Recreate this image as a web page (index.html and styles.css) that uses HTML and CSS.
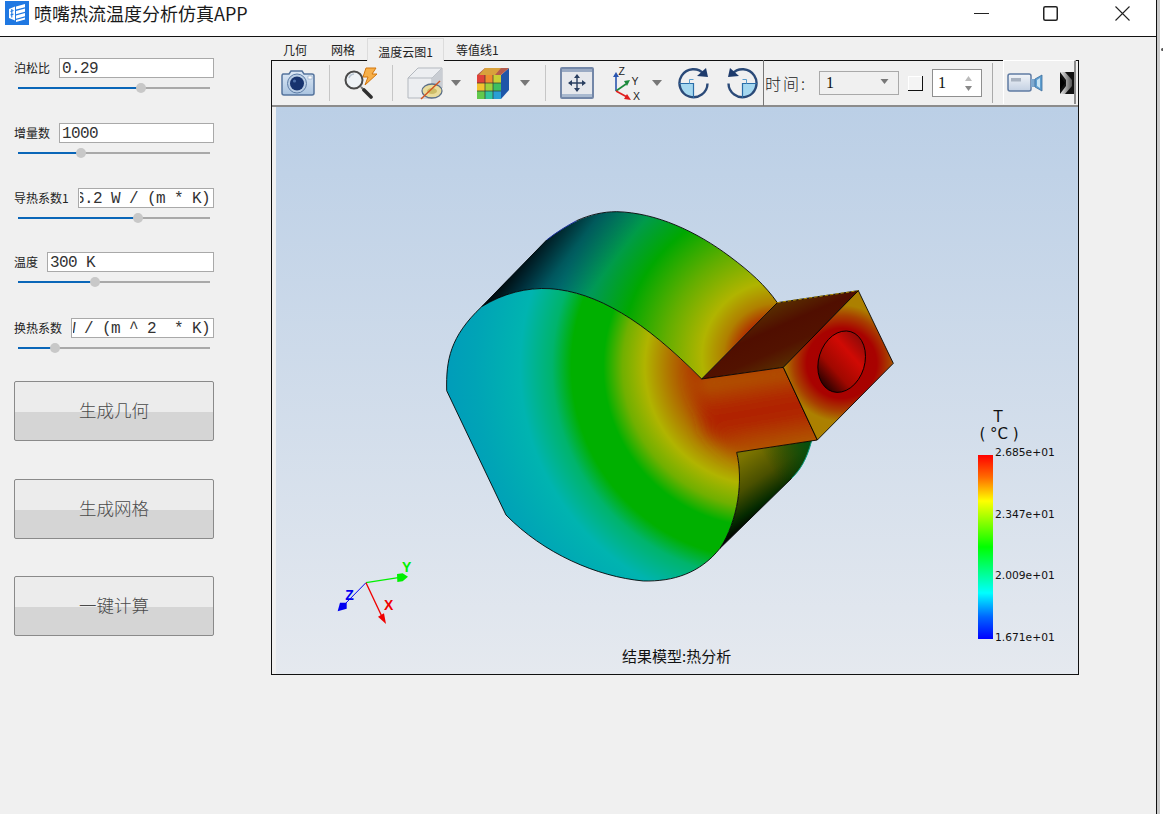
FILE: index.html
```html
<!DOCTYPE html>
<html lang="zh">
<head>
<meta charset="utf-8">
<title>喷嘴热流温度分析仿真APP</title>
<link rel="stylesheet" href="styles.css">
</head>
<body>
<div class="screen">
  <div class="window">
    <header class="titlebar">
      <svg class="app-icon" viewBox="0 0 24 24">
        <rect width="24" height="24" fill="#1f78e2"/>
        <path d="M4 8l6-2.5v14L4 17z" fill="#fff"/>
        <path d="M5.5 10.5l3-1M5.5 14l3-1" stroke="#1f78e2" stroke-width="1.2"/>
        <path d="M6.8 8v8.5" stroke="#1f78e2" stroke-width="1.1"/>
        <path d="M11 5.5l9-2.5v3.2l-9 2.4zM11 10l9-2.4v3.2l-9 2.4zM11 14.5l9-2.4v3.2l-9 2.4zM11 19l9-2.4v1.8l-9 2.6z" fill="#fff"/>
      </svg>
      <span class="app-title">喷嘴热流温度分析仿真APP</span>
      <div class="win-controls">
        <svg class="win-min" viewBox="0 0 15 15"><path d="M0 7.5h15" stroke="#222" stroke-width="1"/></svg>
        <svg class="win-max" viewBox="0 0 15 15"><rect x=".75" y=".75" width="13.5" height="13.5" rx="1.5" fill="none" stroke="#222" stroke-width="1.5"/></svg>
        <svg class="win-close" viewBox="0 0 15 15"><path d="M.5.5l14 14M14.5.5l-14 14" stroke="#222" stroke-width="1.1"/></svg>
      </div>
    </header>
    <main class="content">
      <aside class="panel">
        <section class="param">
          <div class="param-row"><label>泊松比</label><div class="field"><span>0.29</span></div></div>
          <div class="slider"><i class="fill" style="width:64%"></i><b class="knob" style="left:64%"></b></div>
        </section>
        <section class="param">
          <div class="param-row"><label>增量数</label><div class="field"><span>1000</span></div></div>
          <div class="slider"><i class="fill" style="width:33%"></i><b class="knob" style="left:33%"></b></div>
        </section>
        <section class="param">
          <div class="param-row"><label>导热系数1</label><div class="field clipped"><span>16.2 W / (m * K)</span></div></div>
          <div class="slider"><i class="fill" style="width:62.5%"></i><b class="knob" style="left:62.5%"></b></div>
        </section>
        <section class="param param-up">
          <div class="param-row"><label>温度</label><div class="field"><span>300 K</span></div></div>
          <div class="slider"><i class="fill" style="width:40%"></i><b class="knob" style="left:40%"></b></div>
        </section>
        <section class="param param-down">
          <div class="param-row"><label>换热系数</label><div class="field clipped clip-wide"><span>W / (m ^ 2  * K)</span></div></div>
          <div class="slider"><i class="fill" style="width:19.3%"></i><b class="knob" style="left:19.3%"></b></div>
        </section>
        <button class="action first">生成几何</button>
        <button class="action second">生成网格</button>
        <button class="action third">一键计算</button>
      </aside>

      <section class="workspace">
        <nav class="tabs">
          <span class="tab tab-a">几何</span>
          <span class="tab tab-b">网格</span>
          <span class="tab tab-active">温度云图1</span>
          <span class="tab tab-d">等值线1</span>
        </nav>
        <div class="viewer">
          <div class="toolbar">
            <svg class="ti i-camera" viewBox="0 0 34 28">
              <defs><linearGradient id="camBody" x1="0" y1="0" x2="0" y2="1"><stop offset="0" stop-color="#dfeaf6"/><stop offset="1" stop-color="#a9c3e0"/></linearGradient></defs>
              <path d="M2 5h6l2-3h11l2 3h8a2 2 0 0 1 2 2v17a2 2 0 0 1-2 2H3a2 2 0 0 1-2-2V7a2 2 0 0 1 1-2z" fill="url(#camBody)" stroke="#55749d" stroke-width="1.5"/>
              <circle cx="16" cy="14.5" r="9.5" fill="#b9cde4" stroke="#5d7ca5" stroke-width="1"/>
              <circle cx="16" cy="14.5" r="7" fill="#17336e"/>
              <circle cx="13.5" cy="12" r="1.6" fill="#4d6fa8"/>
              <rect x="27" y="7" width="4" height="3" fill="#fff" stroke="#7e97b8" stroke-width=".5"/>
            </svg>
            <i class="tsep s-1"></i>
            <svg class="ti i-mag" viewBox="0 0 36 32">
              <path d="M22 1h10l-4 6h5L21 18l3-8h-5z" fill="#f7b04a" stroke="#d4760c" stroke-width="1"/>
              <circle cx="10" cy="13" r="8.5" fill="#eef2f6" stroke="#4a4a4a" stroke-width="2"/>
              <path d="M5 11a6 6 0 0 1 5-4" fill="none" stroke="#b7c4d2" stroke-width="1.5"/>
              <path d="M17 20l3 3" stroke="#777" stroke-width="2"/>
              <path d="M20 23l7 7" stroke="#2f2f2f" stroke-width="3.6" stroke-linecap="round"/>
            </svg>
            <i class="tsep s-2"></i>
            <svg class="ti i-box" viewBox="0 0 36 33">
              <path d="M1 11L11 1h24v20L25 31H1z" fill="#eceef1" stroke="#b3b8bf" stroke-width="1"/>
              <path d="M1 11h24v20M25 11L35 1" fill="none" stroke="#b3b8bf" stroke-width="1"/>
              <path d="M25 11L35 1v20L25 31z" fill="#c9cdd3"/>
              <ellipse cx="25" cy="24" rx="10" ry="7" fill="#e9dc9c" stroke="#5c7089" stroke-width="1.3"/>
              <ellipse cx="25" cy="24" rx="5" ry="3" fill="#cdbd68"/>
              <path d="M14 32L33 14" stroke="#d2521e" stroke-width="1.4"/>
            </svg>
            <svg class="ti i-arrow a-1" viewBox="0 0 10 6"><path d="M0 0h10L5 6z" fill="#777"/></svg>
            <svg class="ti i-cube" viewBox="0 0 33 33">
              <path d="M24 8l8-7v22l-8 9z" fill="#1d55a8"/>
              <path d="M0 8L8 1h24l-8 7z" fill="#b45b4c"/>
              <path d="M8 1h8l-6 7H2zM16 1h8l-6 7h-8z" fill="#d9a13c"/>
              <rect x="0" y="8" width="8" height="8" fill="#e0413a"/>
              <rect x="8" y="8" width="8" height="8" fill="#f08c2e"/>
              <rect x="16" y="8" width="8" height="8" fill="#c9cf35"/>
              <rect x="0" y="16" width="8" height="8" fill="#f2c22f"/>
              <rect x="8" y="16" width="8" height="8" fill="#9ed13c"/>
              <rect x="16" y="16" width="8" height="8" fill="#3dbf62"/>
              <rect x="0" y="24" width="8" height="8" fill="#62c94c"/>
              <rect x="8" y="24" width="8" height="8" fill="#30c6a0"/>
              <rect x="16" y="24" width="8" height="8" fill="#2a9fd6"/>
              <path d="M8 8v24M16 8v24M0 16h24M0 24h24" stroke="#333" stroke-width=".7"/>
            </svg>
            <svg class="ti i-arrow a-2" viewBox="0 0 10 6"><path d="M0 0h10L5 6z" fill="#777"/></svg>
            <i class="tsep s-3"></i>
            <svg class="ti i-fit" viewBox="0 0 34 32">
              <rect x="1" y="1" width="32" height="30" rx="1" fill="#e6e8ec" stroke="#7387a8" stroke-width="2"/>
              <rect x="2" y="2" width="30" height="3" fill="#9aaac3"/>
              <rect x="2" y="27" width="30" height="3" fill="#a9b9cf"/>
              <path d="M17 8v16M9 16h16" stroke="#2a3f60" stroke-width="1.4"/>
              <path d="M17 7l-3 4h6zM17 25l-3-4h6zM8 16l4-3v6zM26 16l-4-3v6z" fill="#2a3f60"/>
            </svg>
            <svg class="ti i-axes" viewBox="0 0 30 33">
              <path d="M4 24V8" stroke="#2a55b0" stroke-width="1.6"/><path d="M4 5l-3 5h6z" fill="#2a55b0"/>
              <path d="M4 24l10-7" stroke="#1c8a3c" stroke-width="1.6"/><path d="M18 13l-6 1 3 5z" fill="#1c8a3c"/>
              <path d="M4 24l11 6" stroke="#e01f1f" stroke-width="1.6"/><path d="M19 33l-7-1 3-5z" fill="#e01f1f"/>
              <text x="6.5" y="8" class="axis-letter">Z</text>
              <text x="19.5" y="18" class="axis-letter">Y</text>
              <text x="21" y="33" class="axis-letter">X</text>
            </svg>
            <svg class="ti i-arrow a-3" viewBox="0 0 10 6"><path d="M0 0h10L5 6z" fill="#777"/></svg>
            <svg class="ti i-rot r-1" viewBox="0 0 31 32">
              <path d="M15.5 16.5H2a13.5 13.5 0 0 0 13.5 13.5z" fill="#a5d8f0"/>
              <path d="M26 7a14 14 0 1 0 3.5 9.5" fill="none" stroke="#2b4a78" stroke-width="2.4"/>
              <path d="M30 10l-11-1 9-8z" fill="#1d3a6b"/>
              <path d="M1 16.5h14.5V31" fill="none" stroke="#2b6ea8" stroke-width="1.2"/>
              <path d="M15.5 12.5h-4v4" fill="none" stroke="#5a9ccc" stroke-width="1"/>
            </svg>
            <svg class="ti i-rot r-2" viewBox="0 0 31 32">
              <g transform="translate(31 0) scale(-1 1)">
                <path d="M15.5 16.5H2a13.5 13.5 0 0 0 13.5 13.5z" fill="#a5d8f0"/>
                <path d="M26 7a14 14 0 1 0 3.5 9.5" fill="none" stroke="#2b4a78" stroke-width="2.4"/>
                <path d="M30 10l-11-1 9-8z" fill="#1d3a6b"/>
                <path d="M1 16.5h14.5V31" fill="none" stroke="#2b6ea8" stroke-width="1.2"/>
                <path d="M15.5 12.5h-4v4" fill="none" stroke="#5a9ccc" stroke-width="1"/>
              </g>
            </svg>
            <i class="tline"></i>
            <span class="time-label">时间:</span>
            <div class="combo"><span>1</span><svg class="combo-arrow" viewBox="0 0 8 5"><path d="M0 0h8L4 5z" fill="#777"/></svg></div>
            <i class="chk"></i>
            <div class="spin"><span>1</span>
              <svg class="spin-arrows" viewBox="0 0 7 15"><path d="M3.5 0L7 5H0z" fill="#bbb"/><path d="M0 10h7l-3.5 5z" fill="#888"/></svg>
            </div>
            <i class="tsep s-4"></i>
            <div class="cam-btn">
              <svg class="i-video" viewBox="0 0 36 20">
                <defs><linearGradient id="vid" x1="0" y1="0" x2="0" y2="1"><stop offset="0" stop-color="#f2f5f9"/><stop offset="1" stop-color="#c3d0e2"/></linearGradient></defs>
                <rect x="1" y="1" width="23" height="17" rx="2" fill="url(#vid)" stroke="#5f7ba3" stroke-width="1.5"/>
                <rect x="4" y="5" width="10" height="3.5" fill="#a8b2c0"/>
                <path d="M24 6h4v8h-4z" fill="#7fa9cf"/>
                <path d="M28 6l7-4v16l-7-4z" fill="#5f9fd0" stroke="#3e6f9e" stroke-width=".8"/>
                <path d="M30 7l3-2v10l-3-2z" fill="#c7e3f3"/>
              </svg>
              <svg class="i-more" viewBox="0 0 14 22">
                <defs><linearGradient id="mg" x1="0" y1="0" x2="1" y2="0"><stop offset="0" stop-color="#eee"/><stop offset="1" stop-color="#555"/></linearGradient></defs>
                <rect width="14" height="22" fill="#111"/>
                <path d="M0 0h5l7 8v6l-7 8H0l6-8V8z" fill="url(#mg)"/>
                <path d="M0 4l5 7-5 7z" fill="#000"/>
              </svg>
            </div>
          </div>
          <div class="canvas">
            <svg class="scene" viewBox="0 0 802 567">
              <defs>
                <radialGradient id="faceT" gradientUnits="userSpaceOnUse" cx="1000" cy="500" r="960">
                  <stop offset="0" stop-color="#b01e00"/>
                  <stop offset=".2" stop-color="#b02800"/>
                  <stop offset=".29" stop-color="#b07000"/>
                  <stop offset=".37" stop-color="#b0b400"/>
                  <stop offset=".44" stop-color="#70b000"/>
                  <stop offset=".5" stop-color="#00b000"/>
                  <stop offset=".6" stop-color="#00b000"/>
                  <stop offset=".66" stop-color="#00b46c"/>
                  <stop offset=".76" stop-color="#00b4b0"/>
                  <stop offset=".9" stop-color="#00a4b6"/>
                  <stop offset="1" stop-color="#009cba"/>
                </radialGradient>
                <radialGradient id="sideT" gradientUnits="userSpaceOnUse" cx="1040" cy="470" r="800">
                  <stop offset="0" stop-color="#a00000"/>
                  <stop offset=".13" stop-color="#b02000"/>
                  <stop offset=".2" stop-color="#b08000"/>
                  <stop offset=".28" stop-color="#b0b400"/>
                  <stop offset=".42" stop-color="#62ae00"/>
                  <stop offset=".58" stop-color="#00a800"/>
                  <stop offset=".72" stop-color="#009a50"/>
                  <stop offset=".85" stop-color="#008a8c"/>
                  <stop offset="1" stop-color="#007a9c"/>
                </radialGradient>
                <linearGradient id="sideShade" gradientUnits="userSpaceOnUse" x1="250" y1="210" x2="460" y2="370">
                  <stop offset="0" stop-color="#000" stop-opacity=".9"/>
                  <stop offset=".4" stop-color="#000" stop-opacity=".35"/>
                  <stop offset=".85" stop-color="#000" stop-opacity="0"/>
                </linearGradient>
                <linearGradient id="neckFront" gradientUnits="userSpaceOnUse" x1="960" y1="510" x2="1000" y2="750">
                  <stop offset="0" stop-color="#b06000"/>
                  <stop offset=".4" stop-color="#b02400"/>
                  <stop offset=".65" stop-color="#b02400"/>
                  <stop offset="1" stop-color="#b05a00"/>
                </linearGradient>
                <filter id="soft" filterUnits="userSpaceOnUse" x="650" y="400" width="700" height="450">
                  <feGaussianBlur stdDeviation="24"/>
                </filter>
                <linearGradient id="neckTop" gradientUnits="userSpaceOnUse" x1="985" y1="300" x2="1085" y2="525">
                  <stop offset="0" stop-color="#5c3e00"/>
                  <stop offset=".4" stop-color="#500e00"/>
                  <stop offset=".65" stop-color="#521200"/>
                  <stop offset="1" stop-color="#5a3c00"/>
                </linearGradient>
                <radialGradient id="endFace" gradientUnits="userSpaceOnUse" cx="1235" cy="490" r="175">
                  <stop offset="0" stop-color="#a80000"/>
                  <stop offset=".6" stop-color="#a80200"/>
                  <stop offset=".82" stop-color="#a84000"/>
                  <stop offset="1" stop-color="#ac8000"/>
                </radialGradient>
                <linearGradient id="hole" gradientUnits="userSpaceOnUse" x1="1290" y1="410" x2="1190" y2="575">
                  <stop offset="0" stop-color="#8c0a08"/>
                  <stop offset=".3" stop-color="#d00a04"/>
                  <stop offset=".65" stop-color="#a00800"/>
                  <stop offset="1" stop-color="#100000"/>
                </linearGradient>
                <linearGradient id="wedge" gradientUnits="userSpaceOnUse" x1="935" y1="770" x2="1040" y2="925">
                  <stop offset="0" stop-color="#7c7400"/>
                  <stop offset=".45" stop-color="#4a5000"/>
                  <stop offset=".8" stop-color="#042a00"/>
                  <stop offset="1" stop-color="#000"/>
                </linearGradient>
                <linearGradient id="wedgeTip" gradientUnits="userSpaceOnUse" x1="1140" y1="730" x2="1020" y2="800">
                  <stop offset="0" stop-color="#005010" stop-opacity=".95"/>
                  <stop offset="1" stop-color="#004000" stop-opacity="0"/>
                </linearGradient>
                <clipPath id="faceClip"><path d="M50 572C48 480 60 410 155 320C220 280 290 262 360 266C500 276 640 360 815 537L1060 502L1162 720L920 757C940 840 925 960 870 1045C810 1120 730 1145 640 1143C500 1130 340 1060 228 945Z"/></clipPath>
              </defs>
              <g transform="translate(154 93) scale(.33333)">
                <!-- cylinder side -->
                <path d="M155 320L350 120C420 65 490 35 560 35C680 38 800 95 900 170C960 215 1005 255 1042 308L815 537C640 360 500 276 360 266C290 262 220 280 155 320Z" fill="url(#sideT)"/>
                <path d="M155 320L350 120C420 65 490 35 560 35C680 38 800 95 900 170C960 215 1005 255 1042 308L815 537C640 360 500 276 360 266C290 262 220 280 155 320Z" fill="url(#sideShade)"/>
                <path d="M350 120C380 96 410 78 440 62" fill="none" stroke="#1a2a9a" stroke-width="3"/>
                <path d="M155 320L350 120M440 62C480 44 520 35 560 35C680 38 800 95 900 170C960 215 1005 255 1042 308" fill="none" stroke="#000" stroke-width="2.6"/>
                <!-- lower wedge -->
                <path d="M920 757L1145 722C1130 780 1110 810 1085 835L870 1045C925 960 940 840 920 757Z" fill="url(#wedge)"/>
                <path d="M920 757L1145 722C1130 780 1110 810 1085 835L1000 918L1000 760Z" fill="url(#wedgeTip)"/>
                <path d="M1145 722C1130 780 1110 810 1085 835" fill="none" stroke="#12a08a" stroke-width="3"/>
                <path d="M1085 835L870 1045" stroke="#000" stroke-width="2.6"/>
                <!-- front face + neck front -->
                <g clip-path="url(#faceClip)">
                  <rect x="0" y="200" width="1200" height="960" fill="url(#faceT)"/>
                  <path d="M790 530L1200 470V750L930 765L830 700Z" fill="url(#neckFront)" filter="url(#soft)"/>
                </g>
                <path d="M50 572C48 480 60 410 155 320C220 280 290 262 360 266C500 276 640 360 815 537M1060 502L1162 720L920 757C940 840 925 960 870 1045C810 1120 730 1145 640 1143C500 1130 340 1060 228 945L50 572" fill="none" stroke="#000" stroke-width="2.6"/>
                <!-- neck top -->
                <path d="M815 537L1042 308L1285 272L1060 502Z" fill="url(#neckTop)" stroke="#000" stroke-width="2.6"/>
                <path d="M1042 308L1285 272" stroke="#c8a000" stroke-width="2.6" stroke-dasharray="10 6"/>
                <!-- end face -->
                <path d="M1060 502L1285 272L1390 490L1162 720Z" fill="url(#endFace)" stroke="#000" stroke-width="2.6"/>
                <ellipse cx="1235" cy="485" rx="69" ry="94" transform="rotate(17 1235 485)" fill="url(#hole)" stroke="#000" stroke-width="2.6"/>
              </g>
              <g class="triad" transform="translate(44 443) scale(.33333)">
                <path d="M138 98L240 82" stroke="#00f000" stroke-width="4"/>
                <path d="M231 72L248 70L264 80L248 94L232 96Z" fill="#00f000"/>
                <path d="M138 98L72 165" stroke="#0000f0" stroke-width="3"/>
                <path d="M53 184L60 158L80 158L80 176Z" fill="#0000f0"/>
                <path d="M138 98L186 200" stroke="#f00000" stroke-width="4"/>
                <path d="M198 222L174 200L192 190Z" fill="#f00000"/>
                <text x="246" y="66" class="t-y">Y</text>
                <text x="76" y="150" class="t-z">Z</text>
                <text x="192" y="180" class="t-x">X</text>
              </g>
            </svg>
            <div class="legend">
              <div class="legend-title">T</div>
              <div class="legend-unit">( °C )</div>
              <div class="legend-body">
                <div class="legend-bar"></div>
                <div class="legend-ticks">
                  <span>2.685e+01</span>
                  <span>2.347e+01</span>
                  <span>2.009e+01</span>
                  <span>1.671e+01</span>
                </div>
              </div>
            </div>
            <div class="caption">结果模型:热分析</div>
          </div>
        </div>
      </section>
    </main>
  </div>
  <div class="edge"><i class="edge-dot"></i></div>
</div>
</body>
</html>
```
FILE: styles.css
```css
* { box-sizing: border-box; }
html, body { margin: 0; height: 100%; background: #fff; overflow: hidden; }
body { font-family: "Noto Sans CJK SC", "Liberation Sans", sans-serif; color: #222; }

.screen { display: flex; width: 1163px; height: 814px; }
.window { width: 1157px; display: flex; flex-direction: column; border-right: 1px solid #111; }
.edge { width: 6px; background: #fff; border-left: 3px solid #c9c9c9; position: relative; }
.edge-dot { position: absolute; left: 1px; top: 48px; width: 3px; height: 3px; border-radius: 50%; background: #555; }

/* title bar */
.titlebar { height: 37px; flex: none; display: flex; align-items: flex-start; background: #fff; border-bottom: 1px solid #111; }
.app-icon { width: 24px; height: 24px; margin: 1px 0 0 5px; }
.app-title { margin-left: 5px; font-size: 18px; line-height: 26px; color: #1a1a1a; font-family: "Noto Sans CJK SC", sans-serif; }
.win-controls { margin-left: auto; display: flex; }
.win-min, .win-max, .win-close { width: 15px; height: 15px; margin-top: 6px; }
.win-max { margin-left: 54px; }
.win-close { margin-left: 57px; margin-right: 26px; }

/* layout */
.content { flex: 1; display: flex; background: #f0f0f0; min-height: 0; }
.panel { width: 271px; flex: none; padding: 21px 0 0 14px; display: flex; flex-direction: column; align-items: flex-start; }
.workspace { width: 808px; flex: none; display: flex; flex-direction: column; }

/* parameters */
.param { width: 200px; margin-bottom: 34px; }
.param-up { margin-top: -1px; }
.param-down { margin-top: 1px; margin-bottom: 32px; }
.param-row { display: flex; align-items: center; gap: 9px; height: 20px; }
.param-row label { font-size: 12px; line-height: 20px; color: #222; white-space: nowrap; }
.field { flex: 1; min-width: 0; height: 20px; background: #fff; border: 1px solid #a9a9a9; display: flex; align-items: center; overflow: hidden; padding: 2px 0 0 2px; position: relative; }
.field span { font-family: "Liberation Mono", monospace; font-size: 16px; letter-spacing: -.6px; line-height: 18px; color: #333; white-space: pre; flex: none; }
.field.clipped { justify-content: flex-end; padding: 2px 3px 0 0; }
.field.clipped::before { content: ""; position: absolute; left: 0; top: 0; bottom: 0; width: 1px; background: #fff; z-index: 1; }
.field.clip-wide::before { width: 1px; }
.slider { position: relative; width: 192px; height: 2px; margin: 9px 0 0 4px; background: #a9a9a9; }
.fill { position: absolute; left: 0; top: 0; height: 2px; background: #0a66b8; }
.knob { position: absolute; top: -4px; width: 10px; height: 10px; margin-left: -5px; border-radius: 50%; background: #c8c8c8; }

/* buttons */
.action { display: block; width: 200px; height: 60px; padding: 0 0 3px; border: 1px solid #8a8a8a; border-radius: 2px; font-family: "Noto Sans CJK SC", sans-serif; font-weight: 300; font-size: 17.5px; color: #4a4a4a; background: linear-gradient(#ececec 0, #ececec 52%, #d5d5d5 52%, #d5d5d5 100%); }
.first { margin-top: 0; }
.second { margin-top: 38px; }
.third { margin-top: 37px; }

/* tabs */
.tabs { height: 23px; flex: none; display: flex; align-items: flex-end; font-size: 12px; position: relative; }
.tab { height: 22px; line-height: 24px; color: #222; white-space: nowrap; }
.tab-a { margin-left: 12px; }
.tab-b { margin-left: 24px; }
.tab-active { margin-left: 12px; width: 77px; height: 23px; margin-bottom: -1px; line-height: 25px; text-align: center; background: #f0f0f0; border: 1px solid #dcdcdc; border-bottom: 0; position: relative; z-index: 1; }
.tab-d { margin-left: 12px; }

/* viewer */
.viewer { width: 808px; height: 615px; border: 1px solid #111; display: flex; flex-direction: column; padding-left: 4px; background: #f0f0f0; }
.toolbar { height: 46px; flex: none; margin-left: -4px; display: flex; align-items: center; border-bottom: 2px solid #8c8c8c; background: #f0f0f0; }
.ti { flex: none; display: block; }
.i-camera { width: 34px; height: 28px; margin-left: 9px; }
.tsep { flex: none; width: 1px; height: 36px; background: #c6c6c6; display: block; }
.s-1 { margin-left: 14px; }
.i-mag { width: 36px; height: 32px; margin-left: 14px; }
.s-2 { margin-left: 12px; }
.i-box { width: 36px; height: 33px; margin-left: 14px; }
.i-arrow { width: 10px; height: 6px; }
.a-1 { margin-left: 8px; }
.i-cube { width: 33px; height: 33px; margin-left: 16px; }
.a-2 { margin-left: 10px; }
.s-3 { margin-left: 15px; }
.i-fit { width: 34px; height: 32px; margin-left: 14px; }
.i-axes { width: 30px; height: 33px; margin-left: 18px; }
.axis-letter { font: 10.5px "Liberation Sans", sans-serif; fill: #222; }
.a-3 { margin-left: 10px; }
.i-rot { width: 31px; height: 32px; }
.r-1 { margin-left: 16px; }
.r-2 { margin-left: 18px; }
.tline { flex: none; display: block; width: 1px; height: 46px; margin-left: 5px; background: #777; }
.time-label { flex: none; width: 44px; margin-left: 1px; font-size: 16px; font-weight: 300; letter-spacing: 2px; color: #222; white-space: nowrap; }
.combo { flex: none; width: 80px; height: 24px; margin-left: 10px; border: 1px solid #a9a9a9; display: flex; align-items: center; justify-content: space-between; padding: 0 9px 0 6px; }
.combo span, .spin span { font-family: "Liberation Serif", serif; font-size: 16px; color: #111; }
.combo-arrow { width: 9px; height: 5px; margin-top: -3px; }
.chk { flex: none; display: block; width: 15px; height: 15px; margin-left: 9px; background: #f4f4f4; border-right: 1px solid #111; border-bottom: 1px solid #111; box-shadow: inset 1px 1px 0 #fff; }
.spin { flex: none; width: 50px; height: 28px; margin-left: 9px; background: #fff; border: 1px solid #8f8f8f; display: flex; align-items: center; justify-content: space-between; padding: 0 9px 0 5px; }
.spin-arrows { width: 7px; height: 15px; }
.s-4 { margin-left: 10px; height: 40px; background: #aaa; }
.cam-btn { flex: none; width: 73px; height: 44px; margin-left: 10px; margin-top: -2px; background: #f0f0f0; border-left: 1px solid #fff; border-top: 1px solid #fff; border-right: 2px solid #8c8c8c; display: flex; align-items: center; }
.i-video { width: 36px; height: 20px; margin-left: 3px; }
.i-more { width: 14px; height: 22px; margin-left: 17px; }

.canvas { flex: 1; position: relative; background: linear-gradient(#bbcfe6, #e5e9ef); overflow: hidden; }
.scene { position: absolute; left: 0; top: 0; width: 802px; height: 567px; }
.triad text { font-family: "Liberation Sans", sans-serif; font-weight: 700; font-size: 42px; }
.t-y { fill: #00f000; }
.t-z { fill: #0000f0; }
.t-x { fill: #f00000; }

.legend { position: absolute; left: 702px; top: 302px; width: 90px; color: #111; font-family: "DejaVu Sans", sans-serif; }
.legend-title { width: 40px; text-align: center; font-size: 15px; line-height: 17px; position: relative; }
.legend-unit { width: 44px; text-align: center; font-size: 15px; line-height: 17px; white-space: pre; margin-left: -1px; }
.legend-body { display: flex; margin-top: 12px; height: 184px; }
.legend-bar { width: 15px; height: 184px; background: linear-gradient(#ff0000 0, #ff6a00 12%, #ffff00 25%, #00ff00 50%, #00ffff 75%, #0066ff 88%, #0000ff 100%); }
.legend-ticks { margin-left: 2px; height: 199px; margin-top: -9px; display: flex; flex-direction: column; justify-content: space-between; font-size: 10.7px; line-height: 14px; white-space: nowrap; }

.caption { position: absolute; left: 346px; top: 540px; font-size: 15px; line-height: 18px; color: #111; white-space: nowrap; }
```
